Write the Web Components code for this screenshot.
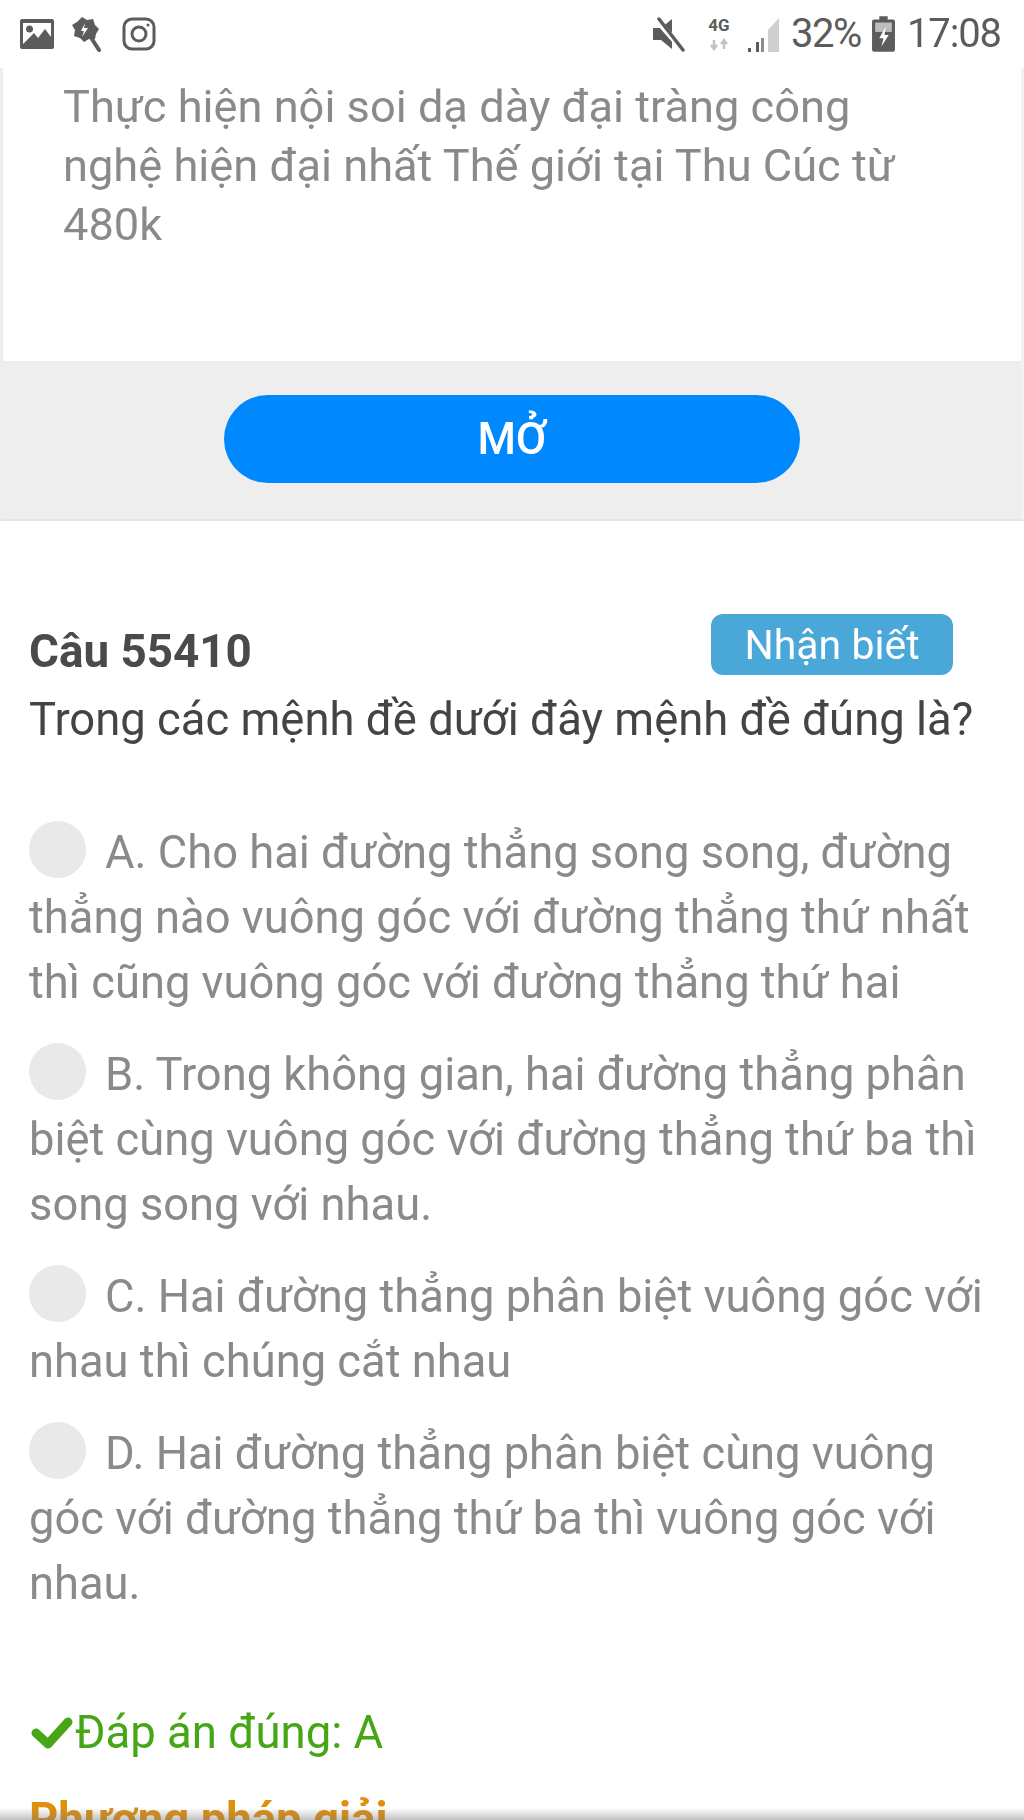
<!DOCTYPE html>
<html lang="vi"><head><meta charset="utf-8"><title>Câu 55410</title>
<style>
html,body{margin:0;padding:0;background:#fff}
body{width:1024px;height:1820px;overflow:hidden;font-family:Roboto,"Liberation Sans",sans-serif}
</style></head><body>
<phone-page>
  <status-bar></status-bar>
  <ad-card>
    <span slot="text">Thực hiện nội soi dạ dày đại tràng công nghệ hiện đại nhất Thế giới tại Thu Cúc từ 480k</span>
    <span slot="action">MỞ</span>
  </ad-card>
  <quiz-question number="Câu 55410" level="Nhận biết" prompt="Trong các mệnh đề dưới đây mệnh đề đúng là?">
    <quiz-option>A. Cho hai đường thẳng song song, đường thẳng nào vuông góc với đường thẳng thứ nhất thì cũng vuông góc với đường thẳng thứ hai</quiz-option>
    <quiz-option>B. Trong không gian, hai đường thẳng phân biệt cùng vuông góc với đường thẳng thứ ba thì song song với nhau.</quiz-option>
    <quiz-option>C. Hai đường thẳng phân biệt vuông góc với nhau thì chúng cắt nhau</quiz-option>
    <quiz-option>D. Hai đường thẳng phân biệt cùng vuông góc với đường thẳng thứ ba thì vuông góc với nhau.</quiz-option>
  </quiz-question>
  <answer-block answer="Đáp án đúng: A" heading="Phương pháp giải"></answer-block>
</phone-page>
<script>
function def(name, html){
  customElements.define(name, class extends HTMLElement{
    constructor(){super();this.attachShadow({mode:'open'});}
    connectedCallback(){
      let h=html;
      for(const a of this.getAttributeNames()) h=h.split('{{'+a+'}}').join(this.getAttribute(a));
      this.shadowRoot.innerHTML=h;
    }
  });
}
def('phone-page',`<style>
:host{display:block;position:relative;width:1024px;height:1820px;overflow:hidden;filter:blur(.7px)}
.shade{position:absolute;left:0;right:0;bottom:0;height:12px;background:linear-gradient(rgba(120,120,120,0),rgba(120,120,120,.45))}
</style><slot></slot><div class="shade"></div>`);
def('status-bar',`<style>
:host{display:flex;align-items:center;height:68px;padding:0 23px 0 20px;box-sizing:border-box;color:#5c5c5c;background:#fff;font-family:Roboto,sans-serif}
.l{display:flex;align-items:center;gap:16px}
.r{margin-left:auto;display:flex;align-items:center}
svg{display:block}
.t{font-size:40px;letter-spacing:-1.500px;line-height:68px}
.u{letter-spacing:-1.100px}
</style>
<div class="l">
<svg width="34" height="32" viewBox="0 0 34 32"><path fill="#5c5c5c" d="M2 1h30a2 2 0 0 1 2 2v26a2 2 0 0 1-2 2H2a2 2 0 0 1-2-2V3a2 2 0 0 1 2-2z"/><path fill="#fff" d="M3 5h28v14l-6-8-7 9-4-5-11 11z"/><circle cx="9.500" cy="11" r="3.500" fill="#5c5c5c"/></svg>
<svg width="36" height="36" viewBox="0 0 36 36"><path fill="#5c5c5c" d="M12 1l5 3 6-1 2 6 4 4-3 5-1 5-6 0-5 3-4-4-6-2 1-6-3-5 5-3z"/><path stroke="#5c5c5c" stroke-width="4" stroke-linecap="round" d="M20 20l9 14"/><path fill="#fff" d="M15 7l-4 8h3l-2 6 6-9h-4z"/></svg>
<svg width="34" height="34" viewBox="0 0 34 34" fill="none" stroke="#5c5c5c" stroke-width="3"><rect x="2" y="2" width="30" height="30" rx="8"/><circle cx="17" cy="17" r="7"/><circle cx="26" cy="8" r="1.500" fill="#5c5c5c" stroke="none"/></svg>
</div>
<div class="r">
<svg width="36" height="36" viewBox="0 0 36 36" style="margin-right:19px"><path fill="#5c5c5c" d="M2 12h8L21 3v30L10 24H2z"/><path stroke="#fff" stroke-width="6" d="M4 2l30 34"/><path stroke="#5c5c5c" stroke-width="3.500" stroke-linecap="round" d="M8 3l24 31"/></svg>
<svg width="26" height="36" viewBox="0 0 26 36" style="margin-right:15px"><text x="13" y="15" text-anchor="middle" font-family="Roboto" font-weight="700" font-size="17" fill="#5c5c5c">4G</text><path stroke="#c4c4c4" stroke-width="2.500" fill="none" d="M8 33v-9m-3 5l3 4 3-4M18 33v-9m-3 4l3-4 3 4"/></svg>
<svg width="32" height="36" viewBox="0 0 32 36" style="margin-right:12px"><path fill="#cfcfcf" d="M21 36V14L32 2v34z"/><path fill="#5c5c5c" d="M1 32h3v4H1zM9 26h3v10H9z"/><path fill="#5c5c5c" d="M14 22h3v14h-3z" opacity=".7"/></svg>
<span class="t">32%</span>
<svg width="25" height="38" viewBox="0 0 24 36" style="margin:0 11px 0 10px"><path fill="#5c5c5c" d="M8 1h8v3h5a2 2 0 0 1 2 2v27a2 2 0 0 1-2 2H3a2 2 0 0 1-2-2V6a2 2 0 0 1 2-2h5z"/><path fill="#bdbdbd" d="M4 7h16v9H4z"/><path fill="#fff" d="M14 11l-6 11h4l-2 8 7-11h-4z"/></svg>
<span class="t u">17:08</span>
</div>`);
def('ad-card',`<style>
:host{display:block;border-left:3px solid #eee;border-right:3px solid #f2f2f2;border-bottom:2px solid #e4e4e4;background:#fff}
.txt{height:293px;box-sizing:border-box;padding:9px 100px 0 60px;font-size:45.200px;line-height:59px;color:#8a8a8a}
.foot{height:158px;background:#eee;display:flex;justify-content:center;padding-top:34px;box-sizing:border-box}
.btn{width:576px;height:88px;border-radius:44px;background:#0088ff;color:#fff;font-size:44px;font-weight:500;display:flex;align-items:center;justify-content:center;line-height:1}
</style><div class="txt"><slot name="text"></slot></div><div class="foot"><div class="btn"><slot name="action"></slot></div></div>`);
def('quiz-question',`<style>
:host{display:block;padding:93px 20px 0 29px;color:#444}
.head{display:flex;align-items:flex-start;justify-content:space-between;padding-right:51px}
.n{font-weight:700;font-size:45.800px;line-height:56px;color:#4a4a4a;padding-top:10px}
.lv{width:242px;height:61px;border-radius:12px;background:#4aa8d8;color:#fff;font-size:41px;display:flex;align-items:center;justify-content:center}
.p{font-size:45.400px;line-height:65px;color:#444;margin:7px 0 68px;white-space:nowrap}
.o{display:flex;flex-direction:column;gap:27px}
</style>
<div class="head"><div class="n">{{number}}</div><div class="lv">{{level}}</div></div>
<div class="p">{{prompt}}</div>
<div class="o"><slot></slot></div>`);
def('quiz-option',`<style>
:host{display:block;font-size:45.300px;line-height:65px;color:#8a8a8a}
.c{display:inline-block;width:57px;height:57px;border-radius:50%;background:#e9e9e9;margin-right:19px;vertical-align:-10px}
</style><span class="c"></span><slot></slot>`);
def('answer-block',`<style>
:host{display:block;padding:84px 0 0 31px}
.a{display:flex;align-items:center;color:#46a616;font-size:45.500px;line-height:65px}
svg{display:block;margin-right:2px}
.h{color:#e0900c;font-size:45.500px;font-weight:700;line-height:65px;margin-top:22px;margin-left:-2px}
</style>
<div class="a"><svg width="42" height="34" viewBox="0 0 42 34"><path fill="none" stroke="#46a616" stroke-width="9" stroke-linecap="round" stroke-linejoin="round" d="M5 17l12 11L37 6"/></svg>{{answer}}</div>
<div class="h">{{heading}}</div>`);
</script>
</body></html>
